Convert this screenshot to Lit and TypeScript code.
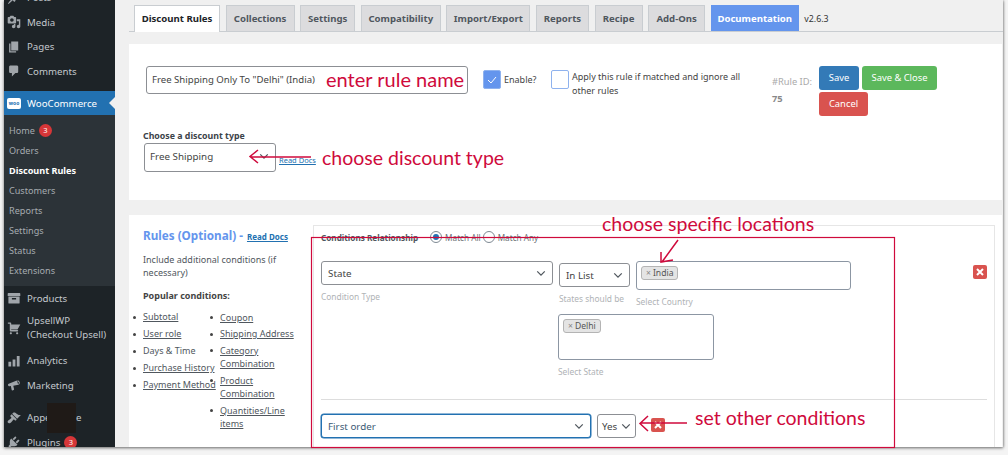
import { LitElement, html, css, svg } from "lit";
import { customElement } from "lit/decorators.js";

const chev = html`<svg class="chev" viewBox="0 0 12 8"><path d="M1.5 1.5 6 6l4.5-4.5" fill="none" stroke="currentColor" stroke-width="1.5"/></svg>`;

const ic = (d: string) => html`<svg class="ic" viewBox="0 0 20 20"><path fill="currentColor" d="${d}"/></svg>`;
const I: Record<string, string> = {
  posts: "M10.44 3.02l1.82-1.82 6.36 6.35-1.83 1.82c-1.05-.68-2.48-.57-3.41.36l-.75.75c-.92.93-1.04 2.35-.35 3.41l-1.83 1.82-2.41-2.41-2.8 2.79c-.42.42-3.38 2.71-3.8 2.29s1.86-3.39 2.28-3.81l2.79-2.79L4.1 9.36l1.83-1.82c1.05.69 2.48.57 3.4-.36l.75-.75c.93-.92 1.05-2.35.36-3.41z",
  media: "M13 11V4c0-.55-.45-1-1-1h-1.67L9 1H5L3.67 3H2c-.55 0-1 .45-1 1v7c0 .55.45 1 1 1h10c.55 0 1-.45 1-1zM7 4.5c1.38 0 2.5 1.12 2.5 2.5S8.38 9.5 7 9.5 4.5 8.38 4.5 7 5.62 4.5 7 4.5zM14 6h5v10.5c0 1.38-1.12 2.5-2.5 2.5S14 17.88 14 16.5s1.12-2.5 2.5-2.5c.17 0 .34.02.5.05V9h-3V6zm-4 8.05V13h2v3.5c0 1.38-1.12 2.5-2.5 2.5S7 17.88 7 16.5 8.12 14 9.5 14c.17 0 .34.02.5.05z",
  pages: "M6 15V2h10v13H6zm-1 1h8v2H3V5h2v11z",
  comments: "M5 2h9c1.1 0 2 .9 2 2v7c0 1.1-.9 2-2 2h-2l-5 5v-5H5c-1.1 0-2-.9-2-2V4c0-1.1.9-2 2-2z",
  products: "M19 4v3H1V4c0-.55.45-1 1-1h16c.55 0 1 .45 1 1zM2 8h16v9c0 .55-.45 1-1 1H3c-.55 0-1-.45-1-1V8zm5 2v2h6v-2H7z",
  cart: "M6 13h9c.55 0 1 .45 1 1s-.45 1-1 1H5c-.55 0-1-.45-1-1V4H2c-.55 0-1-.45-1-1s.45-1 1-1h3c.55 0 1 .45 1 1v2h13l-4 7H6v1zm-.5 3c.83 0 1.5.67 1.5 1.5S6.33 19 5.5 19 4 18.33 4 17.5 4.67 16 5.5 16zm9 0c.83 0 1.5.67 1.5 1.5s-.67 1.5-1.5 1.5-1.5-.67-1.5-1.5.67-1.5 1.5-1.5z",
  analytics: "M2 11h4v7H2zM8 8h4v10H8zM14 3h4v15h-4z",
  marketing: "M18.15 5.94c.46 1.62-.38 3.22-1.89 3.64l-.36-1.27c.8-.23 1.3-1.1 1.02-2.02-.27-.92-1.12-1.42-1.93-1.19l-.36-1.27c1.52-.43 3.06.49 3.52 2.11zM14 3.5 2.5 8.2c-.9.4-1.3 1.2-1 2.2.3 1 1 1.6 2 1.4l2-.4 1.2 5.6c.1.5.6.8 1.1.7l1.6-.4c.5-.1.8-.6.7-1.1l-1.1-5.3 7.2-1.2L14 3.500z",
  appearance: "M14.48 11.06L7.41 3.99l1.5-1.5c.5-.56 2.3-.47 3.51.32 1.21.8 1.43 1.28 2.91 2.1 1.18.64 2.45 1.26 4.45.85zm-.71.71L6.7 4.7 4.93 6.47c-.39.39-.39 1.02 0 1.41l1.06 1.06c.39.39.39 1.03 0 1.42-.6.6-1.43 1.11-2.21 1.69-.35.26-.7.53-1.01.84C1.43 13.23 0 15.5 1.43 16.93c1.43 1.43 3.7 0 5.04-1.34.31-.31.58-.66.84-1.01.58-.78 1.09-1.61 1.69-2.21.39-.39 1.03-.39 1.42 0l1.06 1.06c.39.39 1.02.39 1.41 0z",
  plugins: "M13.11 4.36L9.87 7.6 8 5.73l3.24-3.24c.35-.34 1.05-.2 1.56.32.52.51.66 1.21.31 1.55zm-8 1.77l.91-1.12 9.01 9.01-1.19.84c-.71.71-2.63 1.16-3.82 1.16H6.14L4.9 17.26c-.59.59-1.54.59-2.12 0-.59-.58-.59-1.53 0-2.12l1.24-1.24v-3.88c0-1.13.4-3.19 1.09-3.89zm7.26 3.97l3.24-3.24c.34-.35 1.04-.21 1.55.31.52.51.66 1.21.31 1.55l-3.24 3.25z",
};

@customElement("app-root")
export class AppRoot extends LitElement {
  static styles = css`
    :host { display: block; width: 1008px; height: 455px; overflow: hidden; position: relative; background: #f4f4f4; font-family: "Noto Sans", sans-serif; font-size: 9.6px; color: #444; }
    .frame { display: flex; margin-left: 4px; width: 999px; height: 447px; overflow: hidden; background: #f0f0f0; box-shadow: 0 1px 3px rgba(0,0,0,.55), 1px 0 2px rgba(0,0,0,.12); }
    .side { width: 111px; flex: none; background: #1d2327; color: #c3c8cd; font-size: 9.700px; }
    .it { display: flex; align-items: center; height: 24.5px; }
    .it .ic { width: 14px; height: 14px; margin-left: 3px; margin-right: 6px; color: #a0a5aa; flex: none; }
    .posts { margin-top: -14.500px; }
    .comments { margin-bottom: 7.500px; }
    .woo { height: 24px; background: #2271b1; color: #fff; position: relative; }
    .woo::after { content: ""; position: absolute; right: 0; top: 6px; border: 6px solid transparent; border-right-color: #f0f0f0; border-left-width: 0; }
    .wlogo { width: 14px; height: 11px; margin: 0 6px 0 3px; background: #fff; border-radius: 2px; color: #2271b1; font: 700 5px/11px "Noto Sans", sans-serif; text-align: center; }
    .sub { background: #2c3338; padding: 5px 0; color: #a6abb0; font-size: 9.100px; }
    .sub div { height: 20.100px; padding-left: 5px; display: flex; align-items: center; }
    .sub .cur { color: #fff; font-weight: 700; }
    .badge { display: inline-block; width: 13px; height: 13px; line-height: 13px; border-radius: 50%; background: #d63638; color: #fff; font-size: 7.500px; text-align: center; margin-left: 4px; }
    .two { height: 36px; margin-bottom: 2px; line-height: 14px; }
    .gap { margin-top: 8px; }
    .main { flex: 1; min-width: 0; padding-left: 14px; }
    .tabs { display: flex; height: 32px; padding: 5px 0 0 5px; box-sizing: border-box; border-bottom: 1px solid #c9cdd1; align-items: flex-end; gap: 5.600px; font-size: 9.600px; font-weight: 700; }
    .tab { height: 26px; line-height: 25px; box-sizing: border-box; background: #dcdcde; color: #50575e; border: 1px solid #c9cdd1; border-bottom: 0; text-align: center; }
    .tab.on { background: #fff; color: #1d2327; margin-bottom: -1px; height: 27px; }
    .tab.doc { background: #6495ed; border-color: #6495ed; color: #fff; }
    .ver { font-size: 8.800px; font-weight: 400; color: #333; align-self: center; margin: 2px 0 0 0; }
    .card { background: #fff; margin-top: 12px; width: 873px; box-sizing: border-box; }
    .c1 { height: 156px; padding: 22px 0 0 17px; }
    .r1 { display: flex; align-items: flex-start; }
    .name { width: 322px; height: 28px; box-sizing: border-box; border: 1px solid #8c8f94; border-radius: 3px; padding-left: 5px; line-height: 26px; font-size: 9.600px; color: #444; }
    .cb { width: 18px; height: 19px; box-sizing: border-box; border: 1px solid #8fb2ee; border-radius: 2px; margin-top: 4px; flex: none; background: #fff; }
    .cb.ck { background: #6495ed; margin-left: 15px; display: grid; place-items: center; }
    .cb.ck svg { width: 10px; height: 8px; }
    .en { margin: 6px 0 0 3px; width: 47px; line-height: 16px; font-size: 9px; }
    .apply { width: 187px; margin: 4px 0 0 3px; line-height: 14px; font-size: 9px; }
    .rid { width: 47px; margin: 7px 0 0 13px; color: #aaa; font-size: 9.300px; line-height: 17px; }
    .rid b { display: block; color: #888; margin-top: 0; }
    .btns { width: 122px; display: flex; flex-wrap: wrap; gap: 2px 3px; }
    .btn { height: 24px; line-height: 24px; border-radius: 3px; color: #fff; text-align: center; font-size: 9.400px; box-sizing: border-box; }
    .save { width: 40px; background: #337ab7; }
    .sc { width: 75px; background: #5cb85c; }
    .can { width: 49px; background: #d9534f; }
    .lbl { font-weight: 700; font-size: 8.800px; margin: 14px 0 0 -3px; line-height: 13px; color: #3c434a; }
    .r2 { display: flex; align-items: flex-end; margin: 0 0 0 -2px; }
    .sel { display: flex; align-items: center; justify-content: space-between; box-sizing: border-box; border: 1px solid #8c8f94; border-radius: 3px; background: #fff; padding: 0 6px; flex: none; color: #444; font-size: 9.800px; }
    .chev { width: 10px; height: 7px; color: #50575e; flex: none; }
    .dtype { width: 132px; height: 29px; padding: 0 6px 2px 5px; }
    .rd { font-size: 7.500px; color: #2271b1; text-decoration: underline; margin: 0 0 7px 3px; }
    .c2 { height: 232px; margin-top: 15px; display: flex; overflow: hidden; }
    .left { width: 184px; padding: 11px 0 0 14px; box-sizing: border-box; flex: none; line-height: 13px; color: #50575e; font-size: 9px; }
    .title { font-size: 11.700px; font-weight: 700; color: #6495ed; line-height: 18px; white-space: nowrap; }
    .title a { font-size: 8px; color: #2271b1; text-decoration: underline; margin-left: 1px; }
    .left p { margin: 7px 0 0; }
    .left p.pop { font-weight: 700; margin-top: 10px; color: #444; }
    .lists { display: flex; margin-top: 8px; }
    ul { margin: 0; padding: 0; list-style: none; flex: none; }
    li { margin: 0 0 4px; position: relative; }
    li::before { content: ""; position: absolute; left: -10px; top: 5.500px; width: 3px; height: 3px; border-radius: 50%; background: #444; }
    li a { text-decoration: underline; color: #50575e; }
    .ul1 { width: 77px; white-space: nowrap; }
    .ul2 { width: 76px; line-height: 13.500px; padding-top: .5px; }
    .ul2 li { margin-bottom: 3px; }
    .panel { width: 682px; margin-top: 10px; height: 240px; border: 1px solid #e6e6e6; box-sizing: border-box; padding: 4px 7px 0 7px; position: relative; flex: none; }
    .rel { display: flex; align-items: center; height: 14px; font-size: 8.200px; color: #6b7075; }
    .rel b { color: #50575e; margin-right: 12px; font-size: 8.200px; }
    .radio { width: 12px; height: 12px; box-sizing: border-box; border-radius: 50%; border: 1px solid #7e8993; margin-right: 3px; display: inline-grid; place-items: center; }
    .radio.on::after { content: ""; width: 6px; height: 6px; border-radius: 50%; background: #2271b1; }
    .m2 { margin-left: 2px; }
    .cond { display: flex; margin-top: 17px; align-items: flex-start; }
    .st { width: 232px; height: 24px; }
    .hint { color: #b0b3b6; font-size: 8.400px; line-height: 12px; margin-top: 6px; }
    .mid { margin-left: 6px; width: 77px; padding-top: 2px; }
    .il { width: 71px; height: 24px; }
    .rightc { width: 215px; }
    .box { box-sizing: border-box; border: 1px solid #8c96a3; border-radius: 3px; background: #fff; padding: 4px; }
    .cty { height: 29px; }
    .dl { width: 156px; height: 46px; }
    .states { margin: 6px 0 0 237px; }
    .chip { display: inline-block; height: 14px; line-height: 13px; box-sizing: border-box; padding: 0 4px; background: #e4e4e4; border: 1px solid #b4b4b4; border-radius: 3px; color: #555; font-size: 8.600px; }
    .chip i { font-style: normal; color: #888; margin-right: 2px; }
    .x { position: absolute; width: 14px; height: 14px; border-radius: 2px; background: #d9534f; display: grid; place-items: center; }
    .x svg { width: 8px; height: 8px; }
    .x1 { left: 659px; top: 39px; }
    .x2 { left: 337px; top: 192px; }
    hr { border: 0; border-top: 1px solid #ddd; margin: 21px 0 0; }
    .cond2 { display: flex; gap: 6px; margin-top: 14px; }
    .fo { width: 270px; height: 24px; border-color: #2271b1; box-shadow: 0 0 0 .5px #2271b1; color: #3b5a75; }
    .yes { width: 39px; height: 24px; padding: 0 4px; }
    .ol { position: absolute; inset: 0; pointer-events: none; }
    .ol svg { position: absolute; inset: 0; width: 1008px; height: 455px; }
    .ann { position: absolute; color: #cf0a3c; font-family: "Lato", sans-serif; font-size: 19.500px; line-height: 24px; white-space: nowrap; }
    .a1 { left: 326px; top: 67px; font-size: 20px; }
    .a2 { left: 322px; top: 146px; }
    .a3 { left: 602px; top: 212px; }
    .a4 { left: 695px; top: 406px; }
    .redact { position: absolute; left: 47px; top: 403px; width: 29px; height: 30px; background: #1f1a17; }
  `;

  render() {
    const tabs = ["Collections:69", "Settings:55", "Compatibility:80", "Import/Export:84", "Reports:53", "Recipe:48", "Add-Ons:57"];
    return html`
      <div class="frame">
        <nav class="side">
          <div class="it posts">${ic(I.posts)}Posts</div>
          <div class="it">${ic(I.media)}Media</div>
          <div class="it">${ic(I.pages)}Pages</div>
          <div class="it comments">${ic(I.comments)}Comments</div>
          <div class="it woo"><span class="wlogo">woo</span>WooCommerce</div>
          <div class="sub">
            <div>Home<span class="badge">3</span></div>
            <div>Orders</div>
            <div class="cur">Discount Rules</div>
            <div>Customers</div><div>Reports</div><div>Settings</div><div>Status</div><div>Extensions</div>
          </div>
          <div class="it">${ic(I.products)}Products</div>
          <div class="it two">${ic(I.cart)}<span>UpsellWP<br />(Checkout Upsell)</span></div>
          <div class="it">${ic(I.analytics)}Analytics</div>
          <div class="it">${ic(I.marketing)}Marketing</div>
          <div class="it gap">${ic(I.appearance)}Appearance</div>
          <div class="it">${ic(I.plugins)}Plugins<span class="badge">3</span></div>
        </nav>
        <main class="main">
          <div class="tabs">
            <div class="tab on" style="width:86px">Discount Rules</div>
            ${tabs.map((t) => { const [n, w] = t.split(":"); return html`<div class="tab" style="width:${w}px">${n}</div>`; })}
            <div class="tab doc" style="width:88px">Documentation</div>
            <span class="ver">v2.6.3</span>
          </div>
          <section class="card c1">
            <div class="r1">
              <div class="name">Free Shipping Only To "Delhi" (India)</div>
              <div class="cb ck"><svg viewBox="0 0 10 8"><path d="M1 4l3 3 5-6" fill="none" stroke="#fff" stroke-width="1"/></svg></div>
              <div class="en">Enable?</div>
              <div class="cb"></div>
              <div class="apply">Apply this rule if matched and ignore all other rules</div>
              <div class="rid">#Rule ID:<b>75</b></div>
              <div class="btns">
                <div class="btn save">Save</div><div class="btn sc">Save &amp; Close</div><div class="btn can">Cancel</div>
              </div>
            </div>
            <div class="lbl">Choose a discount type</div>
            <div class="r2">
              <div class="sel dtype">Free Shipping ${chev}</div>
              <a class="rd">Read Docs</a>
            </div>
          </section>
          <section class="card c2">
            <div class="left">
              <div class="title">Rules (Optional) - <a>Read Docs</a></div>
              <p>Include additional conditions (if necessary)</p>
              <p class="pop">Popular conditions:</p>
              <div class="lists">
                <ul class="ul1">
                  <li><a>Subtotal</a></li><li><a>User role</a></li><li>Days &amp; Time</li><li><a>Purchase History</a></li><li><a>Payment Method</a></li>
                </ul>
                <ul class="ul2">
                  <li><a>Coupon</a></li><li><a>Shipping Address</a></li><li><a>Category Combination</a></li><li><a>Product Combination</a></li><li><a>Quantities/Line items</a></li>
                </ul>
              </div>
            </div>
            <div class="panel">
              <div class="rel"><b>Conditions Relationship</b><span class="radio on"></span>Match All<span class="radio m2"></span>Match Any</div>
              <div class="cond">
                <div><div class="sel st">State ${chev}</div><div class="hint">Condition Type</div></div>
                <div class="mid"><div class="sel il">In List ${chev}</div><div class="hint">States should be</div></div>
                <div class="rightc"><div class="box cty"><span class="chip"><i>×</i>India</span></div><div class="hint">Select Country</div></div>
              </div>
              <div class="states"><div class="box dl"><span class="chip"><i>×</i>Delhi</span></div><div class="hint">Select State</div></div>
              <hr />
              <div class="cond2"><div class="sel fo">First order ${chev}</div><div class="sel yes">Yes ${chev}</div></div>
              <div class="x x1"><svg viewBox="0 0 8 8"><path d="M1 1l6 6M7 1 1 7" stroke="#fff" stroke-width="2"/></svg></div>
              <div class="x x2"><svg viewBox="0 0 8 8"><path d="M1 1l6 6M7 1 1 7" stroke="#fff" stroke-width="2"/></svg></div>
            </div>
          </section>
        </main>
      </div>
      <div class="ol">
        <div class="redact"></div>
        ${html`<svg viewBox="0 0 1008 455" fill="none" stroke="#cf0a3c">
          ${svg`<rect x="311.500" y="237.500" width="583" height="210" stroke-width="1.200"/>
          <path stroke-width="1.500" d="M311 157H251M258 150l-8 6.500 8 6.500"/>
          <path stroke-width="1.500" d="M678 240 662 262M661 252l0 10 12-2"/>
          <path stroke-width="1.500" d="M687 423H641M648 416l-8 7.500 8 7.500"/>`}
        </svg>`}
        <div class="ann a1">enter rule name</div>
        <div class="ann a2">choose discount type</div>
        <div class="ann a3">choose specific locations</div>
        <div class="ann a4">set other conditions</div>
      </div>
    `;
  }
}
